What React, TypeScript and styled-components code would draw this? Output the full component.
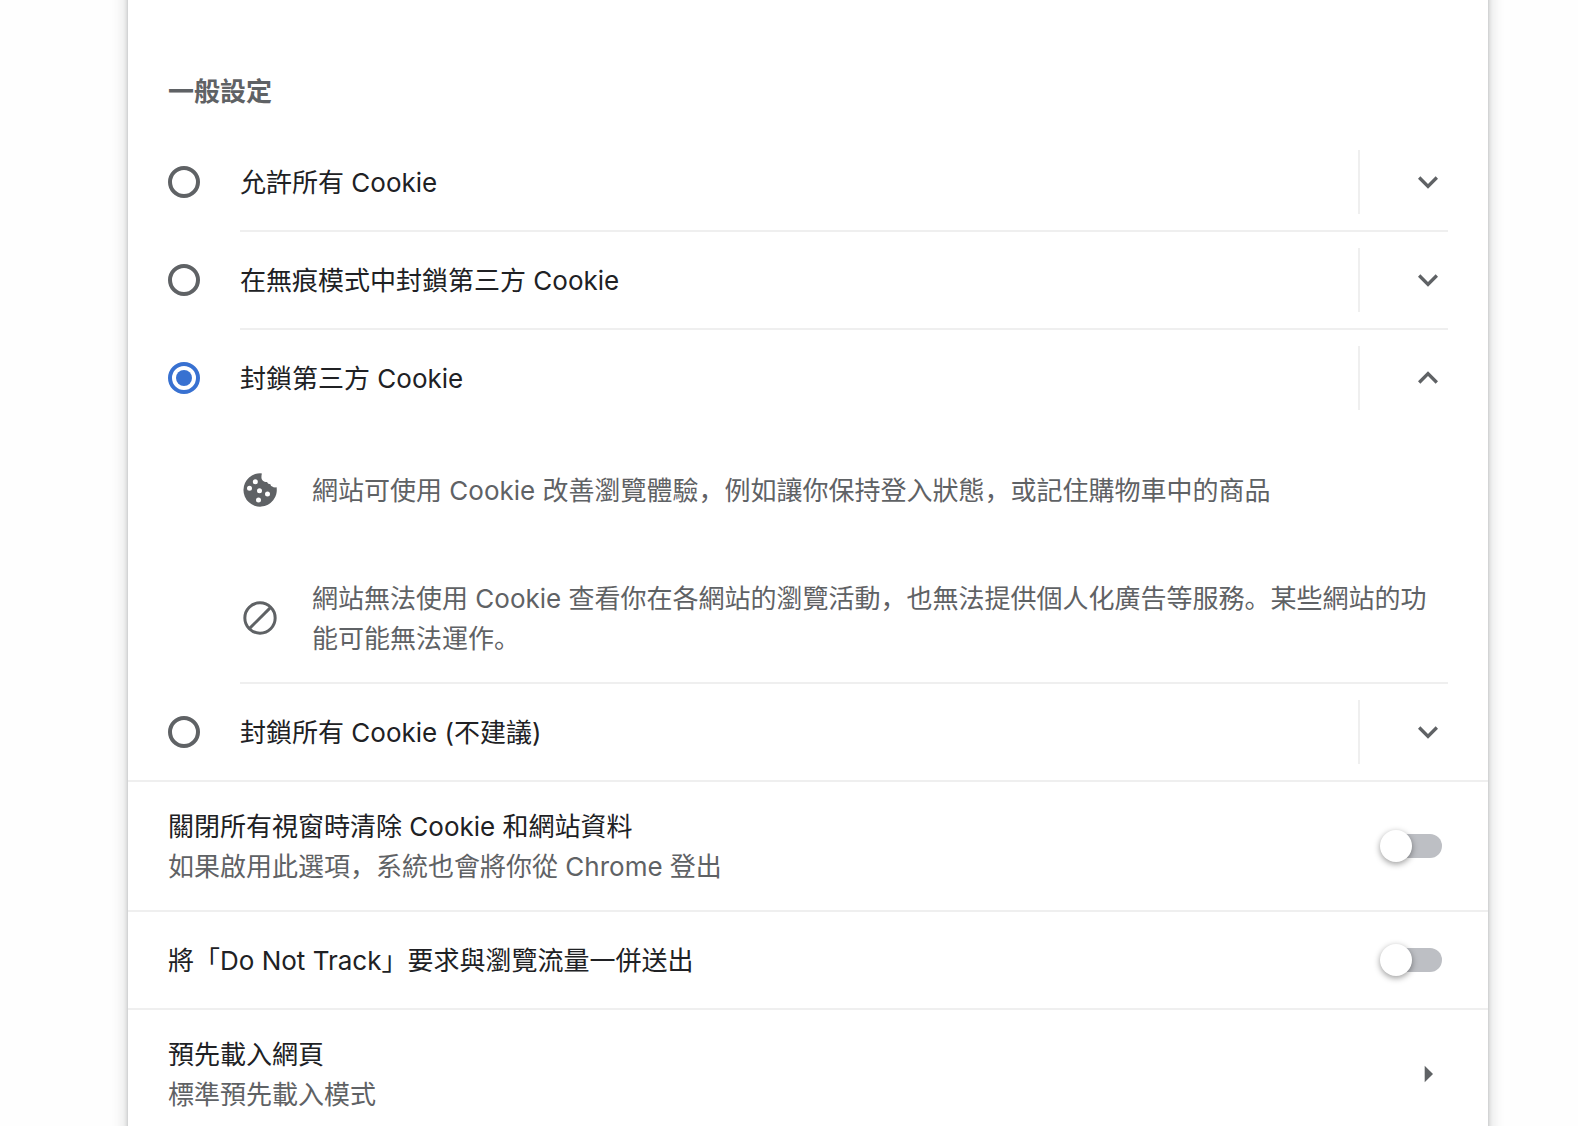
import React, { useState } from 'react';
import styled, { createGlobalStyle } from 'styled-components';

const color = {
  text: '#202124',
  secondary: '#5f6265',
  line: '#efefef',
  accent: '#3871d1',
  track: '#bdbfc4',
};

const GlobalStyle = createGlobalStyle`
  *, *::before, *::after { box-sizing: border-box; }
  html { scrollbar-width: none; }
  body {
    margin: 0;
    background: #fefefe;
    color: ${color.text};
    font-family: Inter, "Noto Sans CJK SC", sans-serif;
    font-size: 26px;
    line-height: 40px;
  }
`;

const Page = styled.main`
  padding: 0 90px 0 128px;
`;

/* The card runs on past the top edge of the window. */
const Card = styled.section`
  margin-top: -40px;
  background: #fff;
  box-shadow: 0 2px 4px rgba(60, 64, 67, 0.3), 0 4px 12px 4px rgba(60, 64, 67, 0.15);
`;

const Group = styled.div`
  padding: 112px 40px 0;
`;

const Heading = styled.h2`
  margin: 0 0 22px;
  font-size: 26px;
  font-weight: 600;
  color: ${color.secondary};
`;

const Option = styled.div`
  display: flex;
  align-items: flex-start;
  gap: 40px;
`;

const Radio = styled.input`
  appearance: none;
  flex: none;
  width: 32px;
  height: 32px;
  margin: 32px 0;
  padding: 4px;
  border: 4px solid ${color.secondary};
  border-radius: 50%;
  background-clip: content-box;
  cursor: pointer;

  &:checked {
    border-color: ${color.accent};
    background-image: radial-gradient(circle closest-side, ${color.accent} 94%, transparent 100%);
  }
`;

const OptionBody = styled.div<{ $last: boolean }>`
  flex: 1;
  min-width: 0;
  border-bottom: ${(p) => (p.$last ? 'none' : `2px solid ${color.line}`)};
`;

const OptionHead = styled.div`
  display: flex;
  align-items: center;
  height: 96px;
`;

const OptionLabel = styled.label`
  flex: 1;
  padding-top: 2px;
  cursor: pointer;
`;

const ExpandButton = styled.button`
  display: flex;
  align-items: center;
  justify-content: flex-end;
  width: 90px;
  height: 64px;
  padding: 0;
  border: 0;
  border-left: 2px solid ${color.line};
  background: none;
  color: ${color.secondary};
  cursor: pointer;
`;

const Icon = styled.svg`
  display: block;
  flex: none;
  width: 40px;
  height: 40px;
  fill: currentColor;
`;

const Details = styled.ul`
  margin: 0;
  padding: 0;
  list-style: none;
`;

const Detail = styled.li`
  display: flex;
  align-items: center;
  gap: 32px;
  min-height: 128px;
  color: ${color.secondary};
`;

const DetailText = styled.span`
  padding-top: 2px;
`;

const Row = styled.div`
  display: flex;
  align-items: center;
  justify-content: space-between;
  min-height: 98px;
  padding: 20px 40px;
  border-top: 2px solid ${color.line};
`;

const RowText = styled.span`
  display: flex;
  flex-direction: column;
  padding: 5px 0 3px;
`;

const Secondary = styled.span`
  color: ${color.secondary};
`;

const Toggle = styled.input`
  appearance: none;
  display: flex;
  align-items: center;
  flex: none;
  width: 56px;
  height: 24px;
  margin: 0 6px;
  border-radius: 12px;
  background: ${color.track};
  cursor: pointer;

  &::before {
    content: '';
    flex: none;
    width: 32px;
    height: 32px;
    margin-left: -6px;
    border-radius: 50%;
    background: #fff;
    box-shadow: 0 2px 6px rgba(0, 0, 0, 0.4);
  }

  &:checked {
    justify-content: flex-end;
    background: #8ab4f8;
  }

  &:checked::before {
    margin: 0 -6px 0 0;
    background: ${color.accent};
  }
`;

const LinkRow = styled(Row).attrs({ as: 'button', type: 'button' })`
  width: 100%;
  border-width: 2px 0 0;
  border-style: solid;
  border-color: ${color.line};
  background: none;
  color: inherit;
  font: inherit;
  text-align: left;
  cursor: pointer;
`;

const ArrowIcon = styled(Icon)`
  color: ${color.secondary};
`;

const CookieIcon = () => (
  <Icon viewBox="0 0 24 24" aria-hidden="true">
    <path
      fillRule="evenodd"
      d="M21.95 10.4c-.8.2-1.9.1-2.9-.6-.5-.3-.7-.8-.8-1.3-.9 0-1.7-.4-2-1.3-1.9.1-3.4-1.1-3.4-2.9 0-.9.1-1.6.3-2.25A10 10 0 1 0 21.95 10.4ZM9.2 5.5a1.5 1.5 0 1 1 0 3 1.5 1.5 0 0 1 0-3ZM5.7 9.4a1.5 1.5 0 1 1 0 3 1.5 1.5 0 0 1 0-3ZM11.7 11a1.5 1.5 0 1 1 0 3 1.5 1.5 0 0 1 0-3ZM16.5 12.9a1.5 1.5 0 1 1 0 3 1.5 1.5 0 0 1 0-3ZM11.1 16.5a1.5 1.5 0 1 1 0 3 1.5 1.5 0 0 1 0-3Z"
    />
  </Icon>
);

const BlockIcon = () => (
  <Icon viewBox="0 0 24 24" aria-hidden="true">
    <g fill="none" stroke="currentColor" strokeWidth="1.8">
      <circle cx="12" cy="12" r="9.1" />
      <path d="M5.6 18.4 18.4 5.6" />
    </g>
  </Icon>
);

const Chevron = ({ up }: { up: boolean }) => (
  <Icon viewBox="0 0 24 24" aria-hidden="true">
    <path
      d={
        up
          ? 'M12 8l-6 6 1.41 1.41L12 10.83l4.59 4.58L18 14z'
          : 'M16.59 8.59L12 13.17 7.41 8.59 6 10l6 6 6-6z'
      }
    />
  </Icon>
);

const options = [
  { id: 'allow-all', label: '允許所有 Cookie' },
  { id: 'block-incognito', label: '在無痕模式中封鎖第三方 Cookie' },
  {
    id: 'block-third-party',
    label: '封鎖第三方 Cookie',
    details: [
      {
        icon: <CookieIcon />,
        text: '網站可使用 Cookie 改善瀏覽體驗，例如讓你保持登入狀態，或記住購物車中的商品',
      },
      {
        icon: <BlockIcon />,
        text: '網站無法使用 Cookie 查看你在各網站的瀏覽活動，也無法提供個人化廣告等服務。某些網站的功能可能無法運作。',
      },
    ],
  },
  { id: 'block-all', label: '封鎖所有 Cookie (不建議)' },
];

export default function App() {
  const [selected, setSelected] = useState('block-third-party');
  const [expanded, setExpanded] = useState('block-third-party');

  return (
    <>
      <GlobalStyle />
      <Page>
        <Card>
          <Group role="radiogroup" aria-labelledby="general">
            <Heading id="general">一般設定</Heading>
            {options.map((option, index) => {
              const open = expanded === option.id;
              return (
                <Option key={option.id}>
                  <Radio
                    type="radio"
                    name="cookies"
                    id={option.id}
                    checked={selected === option.id}
                    onChange={() => setSelected(option.id)}
                  />
                  <OptionBody $last={index === options.length - 1}>
                    <OptionHead>
                      <OptionLabel id={`${option.id}-label`} htmlFor={option.id}>
                        {option.label}
                      </OptionLabel>
                      <ExpandButton
                        type="button"
                        aria-expanded={open}
                        aria-labelledby={`${option.id}-label`}
                        onClick={() => setExpanded(open ? '' : option.id)}
                      >
                        <Chevron up={open} />
                      </ExpandButton>
                    </OptionHead>
                    {open && option.details && (
                      <Details>
                        {option.details.map((detail) => (
                          <Detail key={detail.text}>
                            {detail.icon}
                            <DetailText>{detail.text}</DetailText>
                          </Detail>
                        ))}
                      </Details>
                    )}
                  </OptionBody>
                </Option>
              );
            })}
          </Group>
          <Row>
            <RowText as="label" htmlFor="clear-on-exit">
              關閉所有視窗時清除 Cookie 和網站資料
              <Secondary>如果啟用此選項，系統也會將你從 Chrome 登出</Secondary>
            </RowText>
            <Toggle type="checkbox" role="switch" id="clear-on-exit" />
          </Row>
          <Row>
            <RowText as="label" htmlFor="do-not-track">
              將「Do Not Track」要求與瀏覽流量一併送出
            </RowText>
            <Toggle type="checkbox" role="switch" id="do-not-track" />
          </Row>
          <LinkRow>
            <RowText>
              預先載入網頁
              <Secondary>標準預先載入模式</Secondary>
            </RowText>
            <ArrowIcon viewBox="0 0 24 24" aria-hidden="true">
              <path d="M10 17l5-5-5-5z" />
            </ArrowIcon>
          </LinkRow>
        </Card>
      </Page>
    </>
  );
}
